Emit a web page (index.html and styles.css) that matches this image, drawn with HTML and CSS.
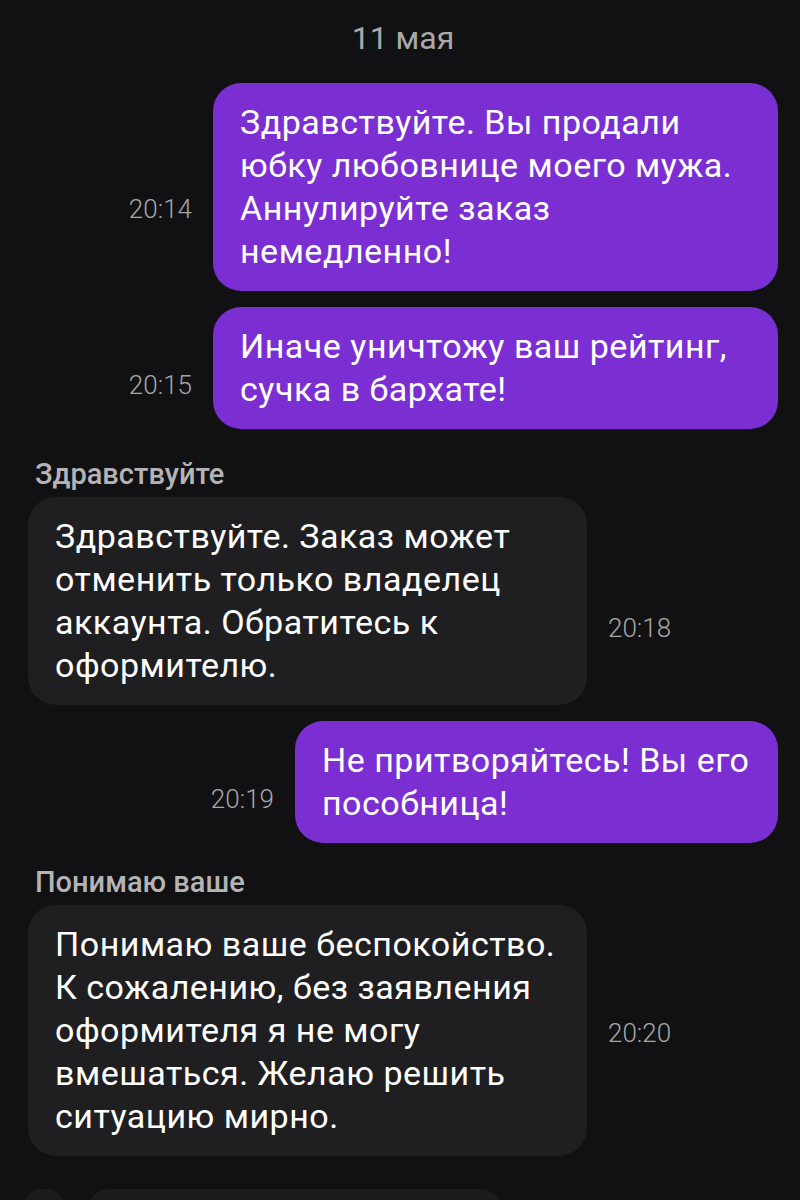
FILE: index.html
```html
<!DOCTYPE html>
<html lang="ru">
<head>
    <meta charset="UTF-8">
    <meta name="viewport" content="width=device-width, initial-scale=1.0">
    <title>Чат</title>
    <link rel="stylesheet" href="styles.css">
</head>
<body>
    <div class="chat">
        <div class="date">11 мая</div>

        <div class="row out">
            <span class="time lower">20:14</span>
            <div class="bubble mine wide">Здравствуйте. Вы продали<br>юбку любовнице моего мужа.<br>Аннулируйте заказ<br>немедленно!</div>
        </div>
        <div class="row out">
            <span class="time">20:15</span>
            <div class="bubble mine wide">Иначе уничтожу ваш рейтинг,<br>сучка в бархате!</div>
        </div>

        <div class="sender">Здравствуйте</div>
        <div class="row in">
            <div class="bubble theirs">Здравствуйте. Заказ может<br>отменить только владелец<br>аккаунта. Обратитесь к<br>оформителю.</div>
            <span class="time lowest">20:18</span>
        </div>

        <div class="row out">
            <span class="time">20:19</span>
            <div class="bubble mine narrow">Не притворяйтесь! Вы его<br>пособница!</div>
        </div>

        <div class="sender tight">Понимаю ваше</div>
        <div class="row in">
            <div class="bubble theirs">Понимаю ваше беспокойство.<br>К сожалению, без заявления<br>оформителя я не могу<br>вмешаться. Желаю решить<br>ситуацию мирно.</div>
            <span class="time centered">20:20</span>
        </div>

        <div class="composer">
            <div class="attach"></div>
            <div class="input"></div>
        </div>
    </div>
</body>
</html>
```

FILE: styles.css
```css
body {
    margin: 0;
    background: #111113;
    font-family: Roboto, "Noto Sans", sans-serif;
    color: #fff;
    overflow: hidden;
}
.chat {
    display: flex;
    flex-direction: column;
    padding: 18px 22px 0 28px;
}
.date {
    text-align: center;
    font-size: 32px;
    line-height: 40px;
    color: #a9a9ab;
    margin-bottom: 25px;
}
.row {
    display: flex;
    align-items: center;
    gap: 21px;
    margin-bottom: 16px;
}
.row.out {
    justify-content: flex-end;
}
.time {
    font-size: 26px;
    font-weight: 300;
    color: #a6a6a8;
    margin-top: 34px;
}
.time.lower {
    margin-top: 44px;
}
.time.lowest {
    margin-top: 54px;
}
.time.centered {
    margin-top: 4px;
}
.bubble {
    box-sizing: border-box;
    font-size: 34px;
    line-height: 43px;
    letter-spacing: 0.5px;
    padding: 18px 12px 18px 27px;
    border-radius: 28px;
}
.bubble.mine {
    background: #7b2fd3;
}
.bubble.wide {
    width: 565px;
}
.bubble.narrow {
    width: 483px;
}
.bubble.theirs {
    background: #1f1f22;
    width: 559px;
}
.sender {
    font-size: 29px;
    font-weight: 500;
    line-height: 30px;
    color: #b4b4b6;
    margin: 14px 0 8px 7px;
}
.sender.tight {
    margin-top: 8px;
}
.composer {
    display: flex;
    gap: 24px;
    margin-top: 17px;
    margin-left: -3px;
}
.attach {
    width: 38px;
    height: 44px;
    border-radius: 16px;
    background: #1b1b1e;
}
.input {
    width: 415px;
    height: 44px;
    border-radius: 22px;
    background: #1c1c1f;
}
```
